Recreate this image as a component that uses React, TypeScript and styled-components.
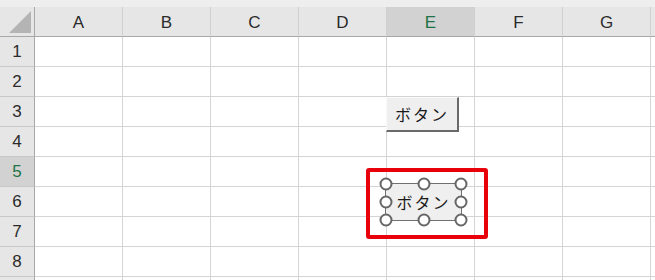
import { Fragment } from "react"
import styled, { createGlobalStyle } from "styled-components"

const GlobalStyle = createGlobalStyle`
    html, body {
        margin: 0;
        padding: 0;
        background: #fff;
    }
    body {
        font-family: "Liberation Sans", "Noto Sans CJK JP", sans-serif;
    }
`

// H and 9 are only partly on screen, so their labels stay empty
const COLUMNS = ['A', 'B', 'C', 'D', 'E', 'F', 'G', '']
const ROWS = [1, 2, 3, 4, 5, 6, 7, 8, 0]
const SELECTED_COL = 'E'
const SELECTED_ROW = 5
const HANDLES = [
    [0, 0], [50, 0], [100, 0],
    [0, 50], [100, 50],
    [0, 100], [50, 100], [100, 100],
]

const Page = styled.div`
    position: relative;
    width: 655px;
    height: 280px;
    overflow: hidden;
`
const Sheet = styled.div`
    display: grid;
    grid-template-columns: 35px repeat(8, 88px);
    grid-template-rows: 7px 30px repeat(9, 30px);
`
const TopStrip = styled.div`
    grid-column: 1 / -1;
    background: #eeeeee;
`
const Corner = styled.div`
    background: #e6e6e6;
    border-right: 1px solid #a8a8a8;
    border-bottom: 1px solid #a8a8a8;
    box-sizing: border-box;
    display: flex;
    align-items: flex-end;
    justify-content: flex-end;
    padding: 0 3px 3px 0;
`
const ColHeader = styled.div<{ $selected?: boolean }>`
    background: ${p => p.$selected ? '#d2d2d2' : '#e6e6e6'};
    color: ${p => p.$selected ? '#217346' : '#2b2b2b'};
    border-right: 1px solid #cfcfcf;
    border-bottom: 1px solid #a8a8a8;
    box-sizing: border-box;
    display: flex;
    align-items: center;
    justify-content: center;
    font-size: 17px;
    padding-top: 2px;
`
const RowHeader = styled.div<{ $selected?: boolean }>`
    background: ${p => p.$selected ? '#d2d2d2' : '#e6e6e6'};
    color: ${p => p.$selected ? '#217346' : '#2b2b2b'};
    border-right: 1px solid #a8a8a8;
    border-bottom: 1px solid #c8c8c8;
    box-sizing: border-box;
    display: flex;
    align-items: center;
    justify-content: center;
    font-size: 17px;
`
const Cell = styled.div`
    border-right: 1px solid #d4d4d4;
    border-bottom: 1px solid #d4d4d4;
    box-sizing: border-box;
    background: #fff;
`

// floating controls drawn over the sheet
const FloatLayer = styled.div<{ $left: number, $top: number }>`
    position: absolute;
    left: ${p => p.$left}px;
    top: ${p => p.$top}px;
`
const FormButton = styled.div`
    width: 73px;
    height: 35px;
    box-sizing: border-box;
    background: #efefef;
    border-top: 1px solid #fafafa;
    border-left: 1px solid #fafafa;
    border-right: 2px solid #6a6a6a;
    border-bottom: 2px solid #6a6a6a;
    display: flex;
    align-items: center;
    justify-content: center;
    font-family: "Noto Sans CJK JP", sans-serif;
    font-size: 16px;
    letter-spacing: 2px;
    color: #1a1a1a;
`
const SelectedButton = styled(FormButton)`
    position: relative;
    width: 75px;
    height: 36px;
    border: none;
    outline: 1px solid #707070;
`
const Highlight = styled.div`
    width: 122px;
    height: 71px;
    box-sizing: border-box;
    border: 4px solid #e8000b;
    border-radius: 3px;
    padding: 12px 0 0 16px;
`
const Handle = styled.div<{ $x: number, $y: number }>`
    position: absolute;
    left: ${p => p.$x}%;
    top: ${p => p.$y}%;
    width: 13px;
    height: 13px;
    transform: translate(-50%, -50%);
    box-sizing: border-box;
    border: 2px solid #666;
    border-radius: 50%;
    background: #fff;
`

export default function App() {
    return (
        <>
            <GlobalStyle />
            <Page>
                <Sheet>
                    <TopStrip />
                    <Corner>
                        <svg width="22" height="22" viewBox="0 0 22 22">
                            <polygon points="22,0 22,22 0,22" fill="#b4b4b4" />
                        </svg>
                    </Corner>
                    {COLUMNS.map((c, i) => (
                        <ColHeader key={i} $selected={c === SELECTED_COL}>{c}</ColHeader>
                    ))}
                    {ROWS.map((r, ri) => (
                        <Fragment key={ri}>
                            <RowHeader $selected={r === SELECTED_ROW}>{r || ''}</RowHeader>
                            {COLUMNS.map((_, ci) => <Cell key={ci} />)}
                        </Fragment>
                    ))}
                </Sheet>

                <FloatLayer $left={386} $top={97}>
                    <FormButton>ボタン</FormButton>
                </FloatLayer>

                <FloatLayer $left={366} $top={168}>
                    <Highlight>
                        <SelectedButton>
                            ボタン
                            {HANDLES.map(([x, y]) => <Handle key={`${x}-${y}`} $x={x} $y={y} />)}
                        </SelectedButton>
                    </Highlight>
                </FloatLayer>
            </Page>
        </>
    )
}
